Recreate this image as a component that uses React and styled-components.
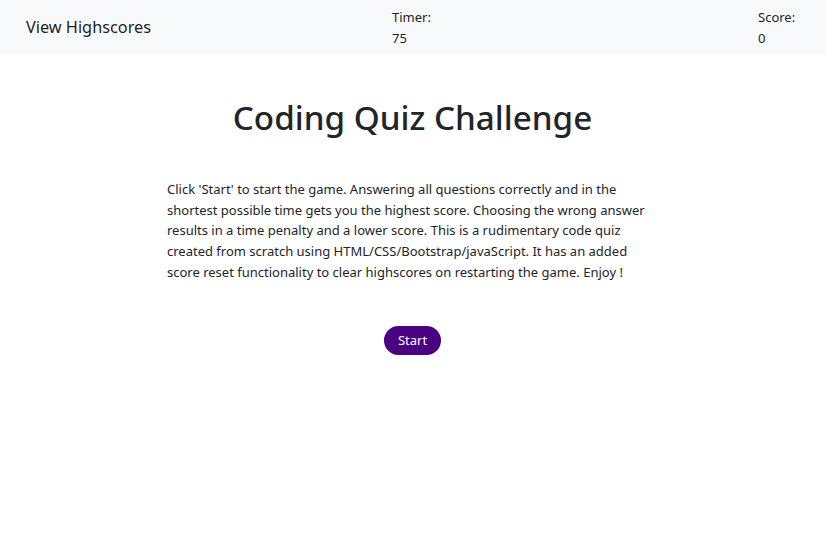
import React from "react";
import styled, { createGlobalStyle } from "styled-components";

const GlobalStyle = createGlobalStyle`
  body {
    margin: 0;
    background: #fff;
    color: #212529;
    font-family: "Segoe UI", "Noto Sans", "Open Sans", sans-serif;
    font-size: 13px;
    line-height: 20.7px;
  }
`;

const Navbar = styled.nav`
  display: grid;
  grid-template-columns: 366px 366px 1fr;
  align-items: center;
  height: 54px;
  padding-left: 26px;
  background: #f8f9fa;
`;

const Brand = styled.a`
  font-size: 16.3px;
  line-height: 1.5;
  margin-top: 1px;
  color: rgba(0, 0, 0, 0.9);
  text-decoration: none;
  cursor: pointer;
`;

const Stat = styled.div`
  font-size: 13px;
  line-height: 20.7px;
  margin-top: 1px;
  color: #212529;
`;

const Main = styled.main`
  display: flex;
  flex-direction: column;
  align-items: center;
`;

const Title = styled.h1`
  margin: 44px 0 0;
  font-size: 33.2px;
  font-weight: 500;
  line-height: 1.2;
`;

const Intro = styled.p`
  width: 491px;
  margin: 41px 0 0;
`;

const StartButton = styled.button`
  margin-top: 44px;
  padding: 4px 13.5px;
  border: none;
  border-radius: 999px;
  background: #4b0082;
  color: #fff;
  font-family: inherit;
  font-size: 13px;
  line-height: 20.7px;
  cursor: pointer;
`;

const App = () => {
  return (
    <>
      <GlobalStyle />
      <Navbar>
        <Brand>View Highscores</Brand>
        <Stat>
          Timer:
          <br />
          75
        </Stat>
        <Stat>
          Score:
          <br />0
        </Stat>
      </Navbar>
      <Main>
        <Title>Coding Quiz Challenge</Title>
        <Intro>
          Click 'Start' to start the game. Answering all questions correctly and
          in the shortest possible time gets you the highest score. Choosing the
          wrong answer results in a time penalty and a lower score. This is a
          rudimentary code quiz created from scratch using
          HTML/CSS/Bootstrap/javaScript. It has an added score reset
          functionality to clear highscores on restarting the game. Enjoy !
        </Intro>
        <StartButton>Start</StartButton>
      </Main>
    </>
  );
};

export default App;
